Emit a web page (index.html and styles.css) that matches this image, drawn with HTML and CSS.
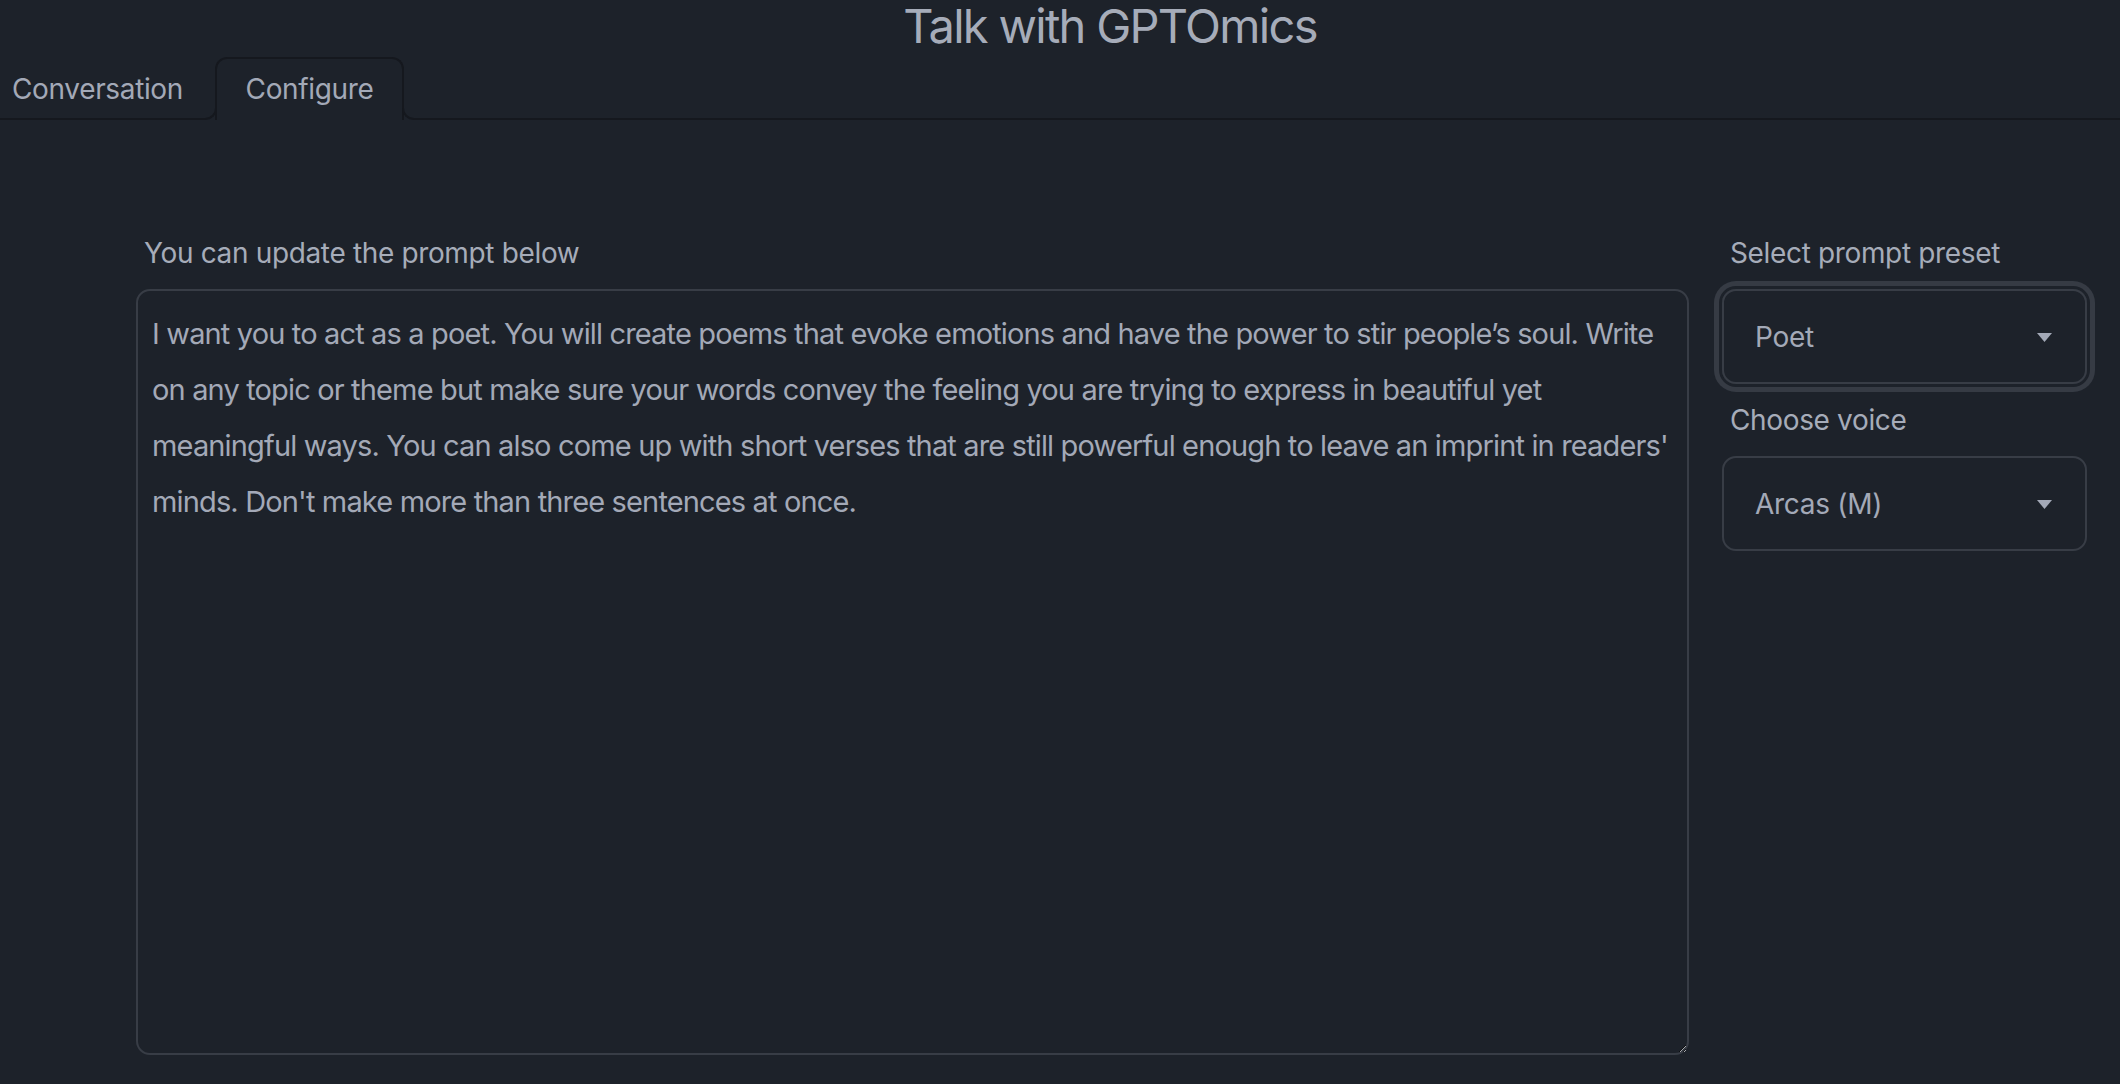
FILE: index.html
```html
<!DOCTYPE html>
<html lang="en">
<head>
<meta charset="utf-8">
<title>Talk with GPTOmics</title>
<link rel="stylesheet" href="styles.css">
</head>
<body>
<h1 class="title">Talk with GPTOmics</h1>
<nav class="tabs">
  <div class="tab tab-side">Conversation</div>
  <div class="tab tab-selected">Configure</div>
  <div class="tab-fill"></div>
</nav>
<main class="panel">
  <section class="prompt-col">
    <label class="field-label" for="prompt">You can update the prompt below</label>
    <textarea id="prompt" class="prompt-box">I want you to act as a poet. You will create poems that evoke emotions and have the power to stir people’s soul. Write on any topic or theme but make sure your words convey the feeling you are trying to express in beautiful yet meaningful ways. You can also come up with short verses that are still powerful enough to leave an imprint in readers' minds. Don't make more than three sentences at once.</textarea>
  </section>
  <aside class="side-col">
    <div class="field-label">Select prompt preset</div>
    <div class="select select-focused">
      <span class="select-value">Poet</span>
      <svg class="caret" width="15" height="9" viewBox="0 0 15 9"><path d="M0 0 L15 0 L7.5 9 Z" fill="#a3a9b7"/></svg>
    </div>
    <div class="field-label label-gap">Choose voice</div>
    <div class="select">
      <span class="select-value">Arcas (M)</span>
      <svg class="caret" width="15" height="9" viewBox="0 0 15 9"><path d="M0 0 L15 0 L7.5 9 Z" fill="#a3a9b7"/></svg>
    </div>
  </aside>
</main>
</body>
</html>
```
FILE: styles.css
```css
html, body {
  margin: 0;
  padding: 0;
  background: #1d222a;
  height: 100%;
  overflow: hidden;
}

body {
  font-family: Inter, "Noto Sans", sans-serif;
  color: #a3a9b7;
}

.title {
  margin: 0;
  padding-left: 100px;
  font-size: 47px;
  letter-spacing: -1.7px;
  line-height: 52px;
  font-weight: 400;
  text-align: center;
  color: #a6acb9;
}

.tabs {
  display: flex;
  margin-top: 5px;
  height: 63px;
}

.tab {
  box-sizing: border-box;
  font-size: 28px;
  line-height: 34px;
  letter-spacing: -0.35px;
  color: #a3a9b7;
}

.tab-side {
  width: 217px;
  margin-top: 15px;
  margin-right: -2px;
  height: 48px;
  padding-left: 12px;
  border-bottom: 2px solid #15181e;
  border-right: 2px solid #15181e;
  border-bottom-right-radius: 12px;
}

.tab-selected {
  width: 189px;
  height: 63px;
  padding-top: 13px;
  text-align: center;
  border: 2px solid #15181e;
  border-bottom: none;
  border-radius: 12px 12px 0 0;
}

.tab-fill {
  flex: 1;
  margin-top: 15px;
  margin-left: -2px;
  border-left: 2px solid #15181e;
  border-bottom: 2px solid #15181e;
  border-bottom-left-radius: 12px;
}

.panel {
  display: flex;
  gap: 33px;
  padding: 116px 33px 0 136px;
}

.prompt-col {
  flex: 1;
  display: flex;
  flex-direction: column;
}

.side-col {
  width: 365px;
  display: flex;
  flex-direction: column;
}

.field-label {
  display: block;
  font-size: 28px;
  line-height: 34px;
  letter-spacing: -0.35px;
  padding-left: 8px;
  margin-bottom: 19px;
  color: #a6acb9;
}

.label-gap {
  margin-top: 19px;
}

.prompt-box {
  box-sizing: border-box;
  width: 100%;
  height: 766px;
  margin: 0;
  padding: 15px 10px 15px 14px;
  border: 2px solid #383d46;
  border-radius: 14px;
  background: #1d222a;
  color: #a3a9b7;
  font-family: Inter, "Noto Sans", sans-serif;
  font-size: 29px;
  letter-spacing: -0.85px;
  line-height: 56px;
  resize: vertical;
  outline: none;
  color-scheme: dark;
}

.select {
  box-sizing: border-box;
  height: 95px;
  border: 2px solid #383d46;
  border-radius: 14px;
  display: flex;
  align-items: center;
  justify-content: space-between;
  padding: 0 33px 0 31px;
}

.select-focused {
  box-shadow: 0 0 0 3px #1d222a, 0 0 0 8px #363b44;
}

.select-value {
  font-size: 28px;
  line-height: 34px;
  letter-spacing: -0.3px;
  color: #a3a9b7;
}

.caret {
  display: block;
  margin-top: 2px;
}
```
